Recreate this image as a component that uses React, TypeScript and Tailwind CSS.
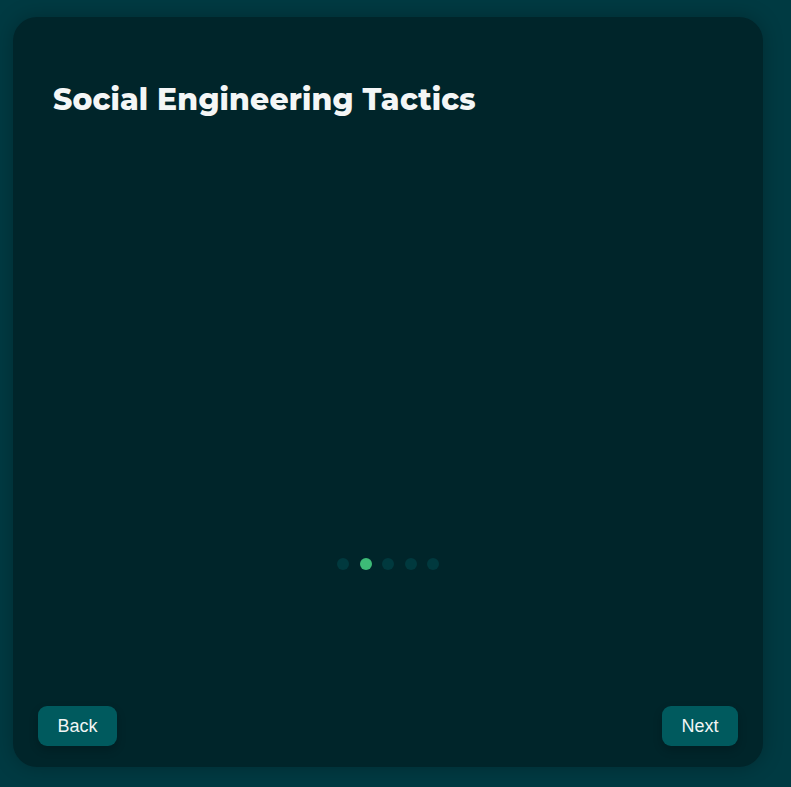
import React from "react";

export default function App() {
  const active = 1;
  return (
    <div className="min-h-[787px] w-full bg-[#003a42] pt-[17px] pl-[13px]">
      <div className="w-[750px] h-[750px] rounded-[24px] bg-[#00252a] shadow-[0_0_20px_rgba(0,0,0,0.25)] flex flex-col relative">
        <h1
          className="pl-[40px] pt-[64px] text-[29.8px] leading-[36px] font-extrabold text-[#f4f6f6] tracking-[0.15px]"
          style={{ fontFamily: "Montserrat, Inter, 'Liberation Sans', sans-serif" }}
        >
          Social Engineering Tactics
        </h1>
        <div className="flex-1" />
        <div className="flex justify-center gap-[10.5px] mb-[136px]">
          {[0, 1, 2, 3, 4].map((i) => (
            <span
              key={i}
              className={
                i === active
                  ? "block w-[12px] h-[12px] rounded-full bg-[#3dbb77]"
                  : "block w-[12px] h-[12px] rounded-full bg-[#00393e]"
              }
            />
          ))}
        </div>
        <div
          className="flex justify-between px-[25px] pb-[21px]"
          style={{ fontFamily: "'Liberation Sans', Arial, sans-serif" }}
        >
          <button className="h-[40px] w-[79px] rounded-[9px] bg-[#005a5e] text-[#f2f5f5] text-[18px] shadow-[0_4px_10px_rgba(0,0,0,0.2)]">
            Back
          </button>
          <button className="h-[40px] w-[76px] rounded-[9px] bg-[#005a5e] text-[#f2f5f5] text-[18px] shadow-[0_4px_10px_rgba(0,0,0,0.2)]">
            Next
          </button>
        </div>
      </div>
    </div>
  );
}
